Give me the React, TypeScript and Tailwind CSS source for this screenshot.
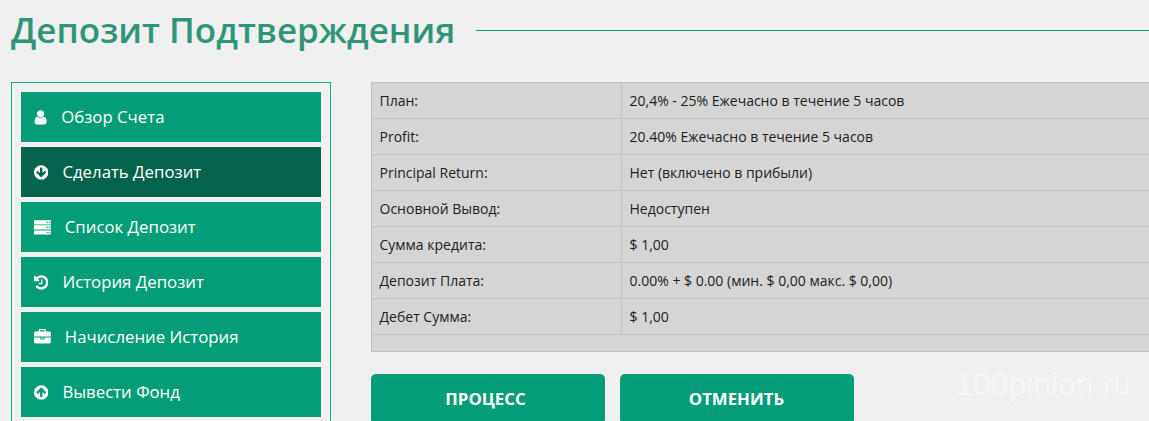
const paths = {
  user: "M1536 1399q0 109-62.5 187t-150.5 78h-854q-88 0-150.5-78t-62.5-187q0-85 8.5-160.5t31.5-152 58.5-131 94-89 134.5-34.5q131 128 313 128t313-128q76 0 134.5 34.5t94 89 58.5 131 31.5 152 8.5 160.5zm-256-887q0 159-112.5 271.5t-271.5 112.5-271.5-112.5-112.5-271.5 112.5-271.5 271.5-112.5 271.5 112.5 112.5 271.5z",
  down: "M1412 897q0-27-18-45l-91-91q-18-18-45-18t-45 18l-189 189v-502q0-26-19-45t-45-19h-128q-26 0-45 19t-19 45v502l-189-189q-19-19-45-19t-45 19l-91 91q-18 18-18 45t18 45l362 362 91 91q18 18 45 18t45-18l91-91 362-362q18-18 18-45zm252-1q0 209-103 385.5t-279.5 279.5-385.5 103-385.5-103-279.5-279.5-103-385.5 103-385.5 279.5-279.5 385.5-103 385.5 103 279.5 279.5 103 385.5z",
  up: "M1412 895q0-27-18-45l-362-362-91-91q-18-18-45-18t-45 18l-91 91-362 362q-18 18-18 45t18 45l91 91q18 18 45 18t45-18l189-189v502q0 26 19 45t45 19h128q26 0 45-19t19-45v-502l189 189q19 19 45 19t45-19l91-91q18-18 18-45zm252 1q0 209-103 385.5t-279.5 279.5-385.5 103-385.5-103-279.5-279.5-103-385.5 103-385.5 279.5-279.5 385.5-103 385.5 103 279.5 279.5 103 385.5z",
  history: "M1664 896q0 156-61 298t-164 245-245 164-298 61q-172 0-327-72.5t-264-204.5q-7-10-6.5-22.5t8.5-20.5l137-138q10-9 25-9 16 2 23 12 73 95 179 147t225 52q104 0 198.5-40.5t163.5-109.5 109.5-163.5 40.5-198.5-40.5-198.5-109.5-163.5-163.5-109.5-198.5-40.5q-98 0-188 35.5t-160 101.5l137 138q31 30 14 69-17 40-59 40h-448q-26 0-45-19t-19-45v-448q0-42 40-59 39-17 69 14l130 129q107-101 244.5-156.5t284.5-55.5q156 0 298 61t245 164 164 245 61 298zm-640-288v448q0 14-9 23t-23 9h-320q-14 0-23-9t-9-23v-64q0-14 9-23t23-9h224v-352q0-14 9-23t23-9h64q14 0 23 9t9 23z",
  briefcase: "M640 256h512v-128h-512v128zm1152 640v480q0 66-47 113t-113 47h-1472q-66 0-113-47t-47-113v-480h672v160q0 26 19 45t45 19h320q26 0 45-19t19-45v-160h672zm-768 0v128h-256v-128h256zm768-480v384h-1792v-384q0-66 47-113t113-47h352v-160q0-40 28-68t68-28h576q40 0 68 28t28 68v160h352q66 0 113 47t47 113z",
  server: "M0 128h1792v448h-1792zM1344 288v128h128v-128zM1568 288v128h128v-128zM0 672h1792v448h-1792zM1344 832v128h128v-128zM1568 832v128h128v-128zM0 1216h1792v448h-1792zM1344 1376v128h128v-128zM1568 1376v128h128v-128z",
};

const menu = [
  { name: "Обзор Счета", path: paths.user, box: "192 0 1408 1792", width: "w-[13.2px]" },
  { name: "Сделать Депозит", path: paths.down, box: "128 0 1536 1792", width: "w-[14.4px]", active: true },
  { name: "Список Депозит", path: paths.server, box: "0 0 1792 1792", width: "w-[16.8px]" },
  { name: "История Депозит", path: paths.history, box: "128 0 1536 1792", width: "w-[14.4px]" },
  { name: "Начисление История", path: paths.briefcase, box: "0 0 1792 1792", width: "w-[16.8px]" },
  { name: "Вывести Фонд", path: paths.up, box: "128 0 1536 1792", width: "w-[14.4px]" },
];

const rows = [
  ["План:", "20,4% - 25% Ежечасно в течение 5 часов"],
  ["Profit:", "20.40% Ежечасно в течение 5 часов"],
  ["Principal Return:", "Нет (включено в прибыли)"],
  ["Основной Вывод:", "Недоступен"],
  ["Сумма кредита:", "$ 1,00"],
  ["Депозит Плата:", "0.00% + $ 0.00 (мин. $ 0,00 макс. $ 0,00)"],
  ["Дебет Сумма:", "$ 1,00"],
];

export default function App() {
  return (
    <div className="relative h-[421px] w-full overflow-hidden bg-[#f0f0f0] font-['Open_Sans',sans-serif]">
      {/* Title */}
      <div className="flex h-[60px] items-center pl-[11px]">
        <h1 className="text-[35px] leading-[60px] font-semibold whitespace-nowrap text-[#2f9479]">
          Депозит Подтверждения
        </h1>
        <div className="ml-[21px] h-px flex-1 bg-[#05a078]" />
      </div>

      <div className="mt-[22px] flex items-start pl-[11px]">
        {/* Sidebar */}
        <div className="flex h-[360px] w-[320px] shrink-0 flex-col gap-[5px] border border-[#05b58a] p-[9px]">
          {menu.map((item, index) => (
            <a
              key={index}
              href="#"
              className={`flex h-[50px] shrink-0 items-center gap-[14px] pl-[13px] text-[16.8px] font-medium text-white ${
                item.active ? "bg-[#04634a]" : "bg-[#059d77]"
              }`}
            >
              <svg viewBox={item.box} fillRule="evenodd" className={`${item.width} h-[16.8px] shrink-0 fill-white`}>
                <path d={item.path} />
              </svg>
              <span>{item.name}</span>
            </a>
          ))}
        </div>

        {/* Details */}
        <div className="ml-[40px] flex-1">
          <div className="border border-r-0 border-[#bfbfbf] bg-[#d5d5d5] pb-[16px]">
            {rows.map((row, index) => (
              <div key={index} className="flex h-[36px] border-b border-[#c2c2c2] text-[14px] text-[#222]">
                <div className="flex w-[250px] items-center border-r border-[#c2c2c2] pl-[7.5px]">{row[0]}</div>
                <div className="flex items-center pl-[7.5px]">{row[1]}</div>
              </div>
            ))}
          </div>

          <div className="mt-[22px] flex gap-[15px]">
            <button className="h-[50px] w-[234px] rounded-[5px] bg-[#059d77] pr-[5px] text-[16.8px] font-bold text-white">
              ПРОЦЕСС
            </button>
            <button className="h-[50px] w-[234px] rounded-[5px] bg-[#059d77] pr-[1px] text-[16.8px] font-bold text-white">
              ОТМЕНИТЬ
            </button>
          </div>
        </div>
      </div>

      {/* Watermark */}
      <span className="absolute top-[364px] left-[955px] font-['Liberation_Sans',sans-serif] text-[32px] leading-[40px] text-[#f6f6f6]">
        100pinion.ru
      </span>
    </div>
  );
}
